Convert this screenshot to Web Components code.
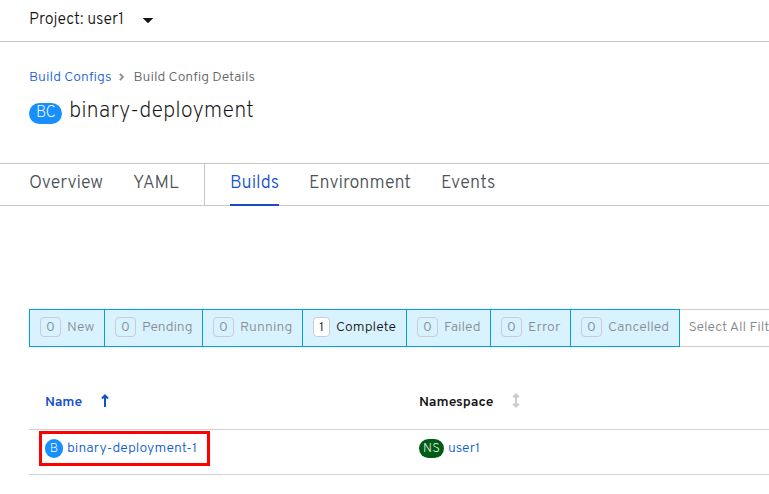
<!DOCTYPE html>
<html lang="en">
<head>
<meta charset="utf-8">
<title>binary-deployment</title>
<style>
html, body { margin: 0; height: 494px; overflow: hidden; background: #fff; }
body { font: 300 14px/21px Overpass, Inter, "Noto Sans", sans-serif; color: #151515; }
</style>
</head>
<body>
<build-page></build-page>
<script>
// Text run that spreads its letters to a given width.
class FitText extends HTMLElement {
  connectedCallback() {
    const root = this.attachShadow({ mode: 'open' });
    root.innerHTML = '<style>:host{display:inline-block;white-space:pre;flex:none}span{display:inline-block}</style><span></span>';
    const span = root.querySelector('span');
    const text = this.getAttribute('text');
    span.textContent = text;
    const w = parseFloat(this.getAttribute('w'));
    const natural = span.getBoundingClientRect().width;
    span.style.letterSpacing = ((w - natural) / text.length) + 'px';
    this.style.width = w + 'px';
  }
}
customElements.define('fit-text', FitText);

class ResourceBadge extends HTMLElement {
  connectedCallback() {
    this.attachShadow({ mode: 'open' }).innerHTML = `<style>
      :host{display:flex;flex:none;justify-content:center;box-sizing:border-box;color:#fff;background:#188fff;border-radius:20px;height:19px;font:200 13px/20px Overpass,Roboto,sans-serif}
      :host([kind=large]){width:33px;height:21px;font-size:16px;line-height:20px}
      :host([kind=small]){width:18px}
      :host([kind=ns]){width:25px;background:#005c15}
      </style><slot></slot>`;
  }
}
customElements.define('resource-badge', ResourceBadge);

class ProjectBar extends HTMLElement {
  connectedCallback() {
    this.attachShadow({ mode: 'open' }).innerHTML = `<style>
      :host{display:flex;box-sizing:border-box;height:42px;padding:9px 0 0 29px;border-bottom:1px solid #c7c7c7;font:300 16px/22px Overpass,Roboto,sans-serif}
      svg{margin:8px 0 0 18px}
      </style><fit-text text="Project: user1" w="95"></fit-text>
      <svg width="12" height="7" viewBox="0 0 12 7"><path d="M.7 1h10.6L6.5 5.7q-.5.5-1 0z" fill="#151515"/></svg>`;
  }
}
customElements.define('project-bar', ProjectBar);

class PageHeading extends HTMLElement {
  connectedCallback() {
    this.attachShadow({ mode: 'open' }).innerHTML = `<style>
      :host{display:block;box-sizing:border-box;height:121px;padding:25px 0 0 29px}
      .crumb{display:flex;height:20px;color:#5f6368}
      .link{color:#1762d6}
      svg{margin:6px 10px 0 7px;flex:none}
      h1{display:flex;margin:0;padding-top:10px;font:200 22px/30px Overpass,Roboto,sans-serif}
      resource-badge{margin:6px 7px 0 0}
      </style><div class="crumb"><fit-text class="link" text="Build Configs" w="82.5"></fit-text>
      <svg width="5" height="8" viewBox="0 0 5 8"><path d="M.8.8 4 4 .8 7.2" fill="none" stroke="#8a8d90" stroke-width="1.8"/></svg>
      <fit-text text="Build Config Details" w="121.5"></fit-text></div>
      <h1><resource-badge kind="large"><fit-text text="BC" w="19"></fit-text></resource-badge><fit-text text="binary-deployment" w="185"></fit-text></h1>`;
  }
}
customElements.define('page-heading', PageHeading);

class TabItem extends HTMLElement {
  connectedCallback() {
    this.attachShadow({ mode: 'open' }).innerHTML = `<style>
      :host{display:block;box-sizing:border-box;height:43px;padding-top:9px;margin-right:30px;color:#4d5258;font:300 18px/24px Overpass,Roboto,sans-serif}
      :host([active]){color:#1350cc;border-bottom:2px solid #1b49c8}
      </style><slot></slot>`;
  }
}
customElements.define('tab-item', TabItem);

class TabBar extends HTMLElement {
  connectedCallback() {
    this.attachShadow({ mode: 'open' }).innerHTML = `<style>
      :host{display:flex;box-sizing:border-box;height:43px;padding-left:29px;box-shadow:inset 0 1px #c7c7c7,inset 0 -1px #c7c7c7}
      i{width:1px;background:#c7c7c7;margin:0 25px 0 -5px}
      </style><tab-item><fit-text text="Overview" w="74"></fit-text></tab-item><tab-item><fit-text text="YAML" w="46"></fit-text></tab-item><i></i>
      <tab-item active><fit-text text="Builds" w="49"></fit-text></tab-item><tab-item><fit-text text="Environment" w="102"></fit-text></tab-item><tab-item><fit-text text="Events" w="54.5"></fit-text></tab-item>`;
  }
}
customElements.define('tab-bar', TabBar);

class FilterBox extends HTMLElement {
  connectedCallback() {
    const a = n => this.getAttribute(n);
    this.attachShadow({ mode: 'open' }).innerHTML = `<style>
      :host{display:flex;flex:none;box-sizing:border-box;height:38px;padding:7px 0 0 10px;border:1px solid #00a0dc;border-left-width:0;background:#d9f2ff;color:#858e93}
      :host(:first-of-type){border-left-width:1px}
      :host([on]){color:#151515}
      b{display:flex;justify-content:center;box-sizing:border-box;width:21px;height:20px;border:1px solid #ccc;border-radius:4px;font-weight:inherit;line-height:20px;margin-right:6px}
      :host([on]) b{width:17px;background:#fff}
      fit-text{line-height:21px}
      </style><b>${a('count')}</b><fit-text text="${a('label')}" w="${a('w')}"></fit-text>`;
    this.style.width = a('box') + 'px';
  }
}
customElements.define('filter-box', FilterBox);

class FilterRow extends HTMLElement {
  connectedCallback() {
    const items = [['New',0,27.5,76],['Pending',0,50.5,98],['Running',0,52.5,100],['Complete',1,60,104],['Failed',0,36.5,84],['Error',0,32.5,80],['Cancelled',0,61,109]];
    this.attachShadow({ mode: 'open' }).innerHTML = `<style>
      :host{display:flex;overflow:hidden;height:38px;margin:103px 0 0 29px}
      .all{box-sizing:border-box;flex:1;min-width:0;height:38px;border:solid #ccc;border-width:1px 0;padding:7px 0 0 8.5px;color:#83868a;line-height:21px}
      </style>${items.map(([l,c,w,b]) => `<filter-box label="${l}" count="${c}" w="${w}" box="${b}" ${c ? 'on' : ''}></filter-box>`).join('')}
      <div class="all"><fit-text text="Select All Filt" w="81"></fit-text></div>`;
  }
}
customElements.define('filter-row', FilterRow);

class BuildTable extends HTMLElement {
  connectedCallback() {
    this.attachShadow({ mode: 'open' }).innerHTML = `<style>
      :host{display:block;position:relative;margin-left:29px}
      .row{display:grid;grid-template-columns:374px 1fr;box-sizing:border-box;padding-left:16px;border-bottom:1px solid #d2d2d2}
      .head{height:83px;padding-top:45px;font-weight:600}
      .body{height:45px;padding-top:8px;color:#0b5bcc}
      .cell{display:flex}
      .sorted{color:#1350cc}
      resource-badge{margin:1px 4px 0 0}
      svg{flex:none}
      .mark{position:absolute;left:10px;top:84px;width:171px;height:35px;box-sizing:border-box;border:3px solid #f00}
      </style><div class="row head"><div class="cell sorted"><fit-text text="Name" w="37"></fit-text>
      <svg style="margin:2px 0 0 19px" width="8" height="14" viewBox="0 0 8 14"><path d="M4 13V2M1 4.5 4 1.5l3 3" fill="none" stroke="#1350cc" stroke-width="2"/></svg></div>
      <div class="cell"><fit-text text="Namespace" w="74.5"></fit-text>
      <svg style="margin:1px 0 0 18px" width="8" height="15" viewBox="0 0 8 15"><path d="M4 2v11M1.2 4.3 4 1.5l2.8 2.8M1.2 10.7 4 13.5l2.8-2.8" fill="none" stroke="#ccc" stroke-width="2.1"/></svg></div></div>
      <div class="row body"><div class="cell"><resource-badge kind="small">B</resource-badge><fit-text text="binary-deployment-1" w="130"></fit-text></div>
      <div class="cell"><resource-badge kind="ns"><fit-text text="NS" w="17"></fit-text></resource-badge><fit-text text="user1" w="32"></fit-text></div></div><div class="mark"></div>`;
  }
}
customElements.define('build-table', BuildTable);

class BuildPage extends HTMLElement {
  connectedCallback() {
    this.attachShadow({ mode: 'open' }).innerHTML = `<style>:host{display:block;width:769px;height:494px;overflow:hidden}</style>
      <project-bar></project-bar><page-heading></page-heading><tab-bar></tab-bar><filter-row></filter-row><build-table></build-table>`;
  }
}
customElements.define('build-page', BuildPage);
</script>
</body>
</html>
